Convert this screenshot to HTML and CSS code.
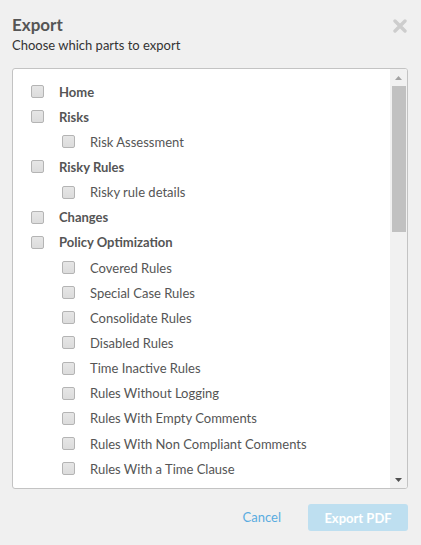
FILE: index.html
```html
<!DOCTYPE html>
<html>
<head>
<meta charset="utf-8">
<link rel="stylesheet" href="styles.css">
</head>
<body>
<div class="dialog">
  <div class="header">
    <div class="titles">
      <div class="title">Export</div>
      <div class="subtitle">Choose which parts to export</div>
    </div>
    <svg class="close" width="14" height="14" viewBox="0 0 14 14"><path d="M2 2 L12 12 M12 2 L2 12" stroke="#cdcdcd" stroke-width="3.4" stroke-linecap="round"/></svg>
  </div>
  <div class="box">
    <div class="list">
      <label class="row l1"><span class="cb"></span><span class="txt">Home</span></label>
      <label class="row l1"><span class="cb"></span><span class="txt">Risks</span></label>
      <label class="row l2"><span class="cb"></span><span class="txt">Risk Assessment</span></label>
      <label class="row l1"><span class="cb"></span><span class="txt">Risky Rules</span></label>
      <label class="row l2"><span class="cb"></span><span class="txt">Risky rule details</span></label>
      <label class="row l1"><span class="cb"></span><span class="txt">Changes</span></label>
      <label class="row l1"><span class="cb"></span><span class="txt">Policy Optimization</span></label>
      <label class="row l2"><span class="cb"></span><span class="txt">Covered Rules</span></label>
      <label class="row l2"><span class="cb"></span><span class="txt">Special Case Rules</span></label>
      <label class="row l2"><span class="cb"></span><span class="txt">Consolidate Rules</span></label>
      <label class="row l2"><span class="cb"></span><span class="txt">Disabled Rules</span></label>
      <label class="row l2"><span class="cb"></span><span class="txt">Time Inactive Rules</span></label>
      <label class="row l2"><span class="cb"></span><span class="txt">Rules Without Logging</span></label>
      <label class="row l2"><span class="cb"></span><span class="txt">Rules With Empty Comments</span></label>
      <label class="row l2"><span class="cb"></span><span class="txt">Rules With Non Compliant Comments</span></label>
      <label class="row l2"><span class="cb"></span><span class="txt">Rules With a Time Clause</span></label>
    </div>
    <div class="scrollbar">
      <div class="arrow"><svg width="7" height="4" viewBox="0 0 7 4"><path d="M0 4 L3.5 0 L7 4 Z" fill="#a3a3a3"/></svg></div>
      <div class="track"><div class="thumb"></div></div>
      <div class="arrow"><svg width="7" height="4" viewBox="0 0 7 4"><path d="M0 0 L3.5 4 L7 0 Z" fill="#505050"/></svg></div>
    </div>
  </div>
  <div class="footer">
    <button class="cancel">Cancel</button>
    <button class="export">Export PDF</button>
  </div>
</div>
</body>
</html>
```
FILE: styles.css
```css
html, body {
  margin: 0;
  padding: 0;
  background: #f0f0f0;
}
body {
  font-family: "Lato", "Liberation Sans", sans-serif;
  width: 421px;
  height: 545px;
  overflow: hidden;
}
.dialog {
  padding: 14px 13px 0 12px;
}
.header {
  display: flex;
  justify-content: space-between;
  align-items: flex-start;
  height: 54px;
}
.title {
  font-size: 17px;
  font-weight: bold;
  color: #555555;
  line-height: 22px;
}
.subtitle {
  font-size: 13px;
  color: #333333;
  line-height: 18px;
}
.close {
  margin-top: 5px;
  margin-right: 1px;
}
.box {
  display: flex;
  height: 419px;
  border: 1px solid #c3c3c3;
  border-radius: 3px;
  background: #ffffff;
  overflow: hidden;
}
.list {
  flex: 1;
  overflow: hidden;
  padding: 10px 0 0 18px;
}
.row {
  display: flex;
  align-items: center;
  height: 25.15px;
  font-size: 13px;
  color: #555555;
}
.row.l1 .txt {
  font-weight: bold;
}
.row.l2 {
  padding-left: 31px;
}
.cb {
  width: 11px;
  height: 11px;
  border: 1px solid #b4b4b4;
  border-radius: 2px;
  background: linear-gradient(#e6e6e6, #dcdcdc);
  margin-right: 15px;
  flex: none;
}
.scrollbar {
  width: 17px;
  background: #f1f1f1;
  display: flex;
  flex-direction: column;
}
.arrow {
  height: 17px;
  display: flex;
  align-items: center;
  justify-content: center;
  flex: none;
}
.track {
  flex: 1;
  padding: 0 1px 0 2px;
}
.thumb {
  height: 146px;
  background: #c1c1c1;
}
.footer {
  display: flex;
  justify-content: flex-end;
  align-items: center;
  margin-top: 14px;
  gap: 17px;
}
button {
  font-family: inherit;
  font-size: 13px;
  border: none;
  cursor: pointer;
}
.cancel {
  background: none;
  color: #5aace0;
  padding: 0 10px;
}
.export {
  width: 100px;
  height: 27px;
  margin-top: 1px;
  background: #bedff0;
  color: #ffffff;
  font-weight: bold;
  border-radius: 3px;
}
```
